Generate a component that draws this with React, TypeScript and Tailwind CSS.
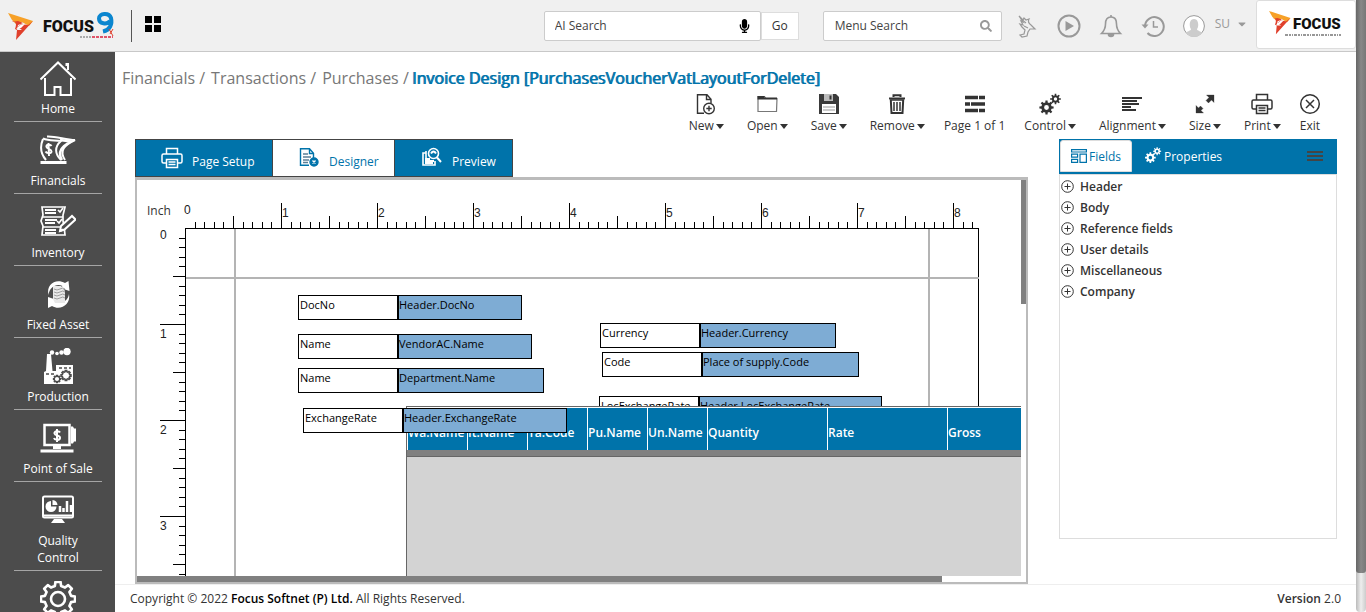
import React from "react";
import { FaMicrophone, FaSearch, FaCaretDown } from "react-icons/fa";

/* ---------- drawing helpers ---------- */

function gear(cx: number, cy: number, outer: number, inner: number, teeth: number): string {
  const pts: string[] = [];
  const step = (Math.PI * 2) / teeth;
  for (let i = 0; i < teeth; i++) {
    const a = i * step;
    const corners: [number, number][] = [
      [-0.3, inner],
      [-0.19, outer],
      [0.19, outer],
      [0.3, inner],
    ];
    corners.forEach(([f, r]) => {
      pts.push(`${(cx + Math.cos(a + f * step) * r).toFixed(2)} ${(cy + Math.sin(a + f * step) * r).toFixed(2)}`);
    });
  }
  return `M${pts.join("L")}Z`;
}

function hole(cx: number, cy: number, r: number): string {
  return `M${cx - r} ${cy}a${r} ${r} 0 1 0 ${r * 2} 0a${r} ${r} 0 1 0 ${-r * 2} 0Z`;
}

type IconProps = { className?: string };

/* ---------- logos ---------- */

const Wing = () => (
  <g>
    <path d="M0 0 L25 8 L21 13 L14 9 L9 12 L4 7Z" fill="#f7a128" />
    <path d="M25 8 L8 27 L9 17 L14 17 L10 14 L13 11 L20 12Z" fill="#e0402c" />
    <path d="M4 9 C8 8 9 11 7 16 L9 17 L10 12 L15 10 L10 8Z" fill="#e0402c" />
    <path d="M8 16 L13 11.500 L17 11 L13 15Z" fill="#fff" />
  </g>
);

const FocusNineLogo = () => (
  <svg width="108" height="32" viewBox="0 0 108 32" role="img" aria-label="Focus 9">
    <g transform="translate(0 3)">
      <Wing />
    </g>
    <text x="35" y="22" fontFamily="Roboto,'Liberation Sans',sans-serif" fontWeight="900" fontSize="16" fill="#111">
      FOCUS
    </text>
    <path d="M102 11 C99 15 91 14 91 8.500 C91 3 101 2 103 8 C104.500 14 102 20 95 21.500" fill="none" stroke="#0b86cf" strokeWidth="4" />
    <path d="M101 19 l4 7 M105 19 l-3 5" stroke="#e0402c" strokeWidth="1" />
    <path d="M72 27h12" stroke="#666" strokeWidth="1" strokeDasharray="2 1" />
    <path d="M84 27h21" stroke="#e0556a" strokeWidth="2" strokeDasharray="3 1" />
  </svg>
);

const FocusLogo = () => (
  <svg width="74" height="28" viewBox="0 0 74 28" role="img" aria-label="Focus">
    <g transform="scale(0.86)">
      <Wing />
    </g>
    <text x="24" y="18" fontFamily="Roboto,'Liberation Sans',sans-serif" fontWeight="900" fontSize="15" fill="#111">
      FOCUS
    </text>
    <path d="M16 24h56" stroke="#777" strokeWidth="1.500" strokeDasharray="3 1 2 1 1 1" />
  </svg>
);

/* ---------- sidebar icons ---------- */

const side = "h-9 w-9 shrink-0";

const HomeIcon = () => (
  <svg className={side} viewBox="0 0 36 36" fill="none" stroke="#fff" strokeWidth="2">
    <path d="M0.500 19.500 18 2.500 35.500 19.500M26.500 6V4h1.500v6M5 18v17h9.500v-8h6v8H31V18" />
  </svg>
);

const FinancialsIcon = () => (
  <svg className={side} viewBox="0 0 36 36" fill="none" stroke="#fff" strokeWidth="1.600">
    <path d="M3 7C0 14 0 21 6 28" strokeWidth="2" />
    <path d="M3 6.500C9 9 14 8 21 9C14 15 15 22 21 28" strokeWidth="2" />
    <path d="M7 4.500C16 4 26 8 35 8C24 13 19 19 25 28" strokeWidth="2" />
    <path d="M20 8l11 1.500C22 14 17 20 22 28" strokeWidth="2.500" />
    <path d="M0.500 30.500h26" strokeWidth="3" />
    <path d="M11.500 14c-1-2-6-1.500-5 1s5 2 5 4.500-5 2-6 0M8.500 11l.5 13" strokeWidth="2" />
  </svg>
);

const InventoryIcon = () => (
  <svg className={side} viewBox="0 0 36 36" fill="none" stroke="#fff" strokeWidth="1.700">
    <path d="M2 3h23l-2 8v6l1 5 1 9H2l1-9-2-5 2-6z" />
    <path d="M2 13h21M3 23h17" />
    <path d="M5 6h11M5 9h11M5 16h12M5 19h10M5 26h11M5 29h11" strokeWidth="2" />
    <path d="M18 6l2 2 3-4M17 17l2 2 3-4" />
    <path d="M20 27l1-5 11-10 3.500 3.500-11 10z" fill="#4c4c4c" strokeWidth="2" />
    <path d="M20 27l3-1.500" strokeWidth="2.500" />
  </svg>
);

const FixedAssetIcon = () => (
  <svg className={side} viewBox="0 0 36 36">
    <path d="M8.500 19C6 8 16 2 25 7l3.500-2 1 10-9-3 2-2c-6-3-13 1-14 9Z" fill="#fff" />
    <path d="M29 18c2 11-9 17-17 12l-4 2V21l9 3-2 2c6 3 13-1 14-8Z" fill="#fff" />
    <path d="M13 10h8l4 5v12H15l-2-4Z" fill="#e8e8e8" />
    <path d="M14 13q3 2 6 0t5 0M14 16q3 2 6 0t5 0M14 19q3 2 6 0t5 0M14 22q3 2 6 0t5 0" stroke="#8a8a8a" fill="none" strokeWidth="0.800" />
  </svg>
);

const ProductionIcon = () => (
  <svg className={side} viewBox="0 0 36 36" fill="#fff">
    <path d="M4 36V24l2-1 1-17h4l1.500 17h3.500V17h17v19Z" />
    <circle cx="27" cy="3.500" r="3.700" />
    <circle cx="21.500" cy="4.500" r="2.200" />
    <circle cx="17" cy="5.500" r="1.800" />
    <circle cx="12" cy="4.500" r="2.200" />
    <path d="M6 26h9M19 20h12" stroke="#4c4c4c" strokeWidth="1.500" strokeDasharray="3 2" />
    <path d={gear(17, 31, 3.6, 2.6, 8)} fill="none" stroke="#4c4c4c" strokeWidth="1.200" />
    <path d={gear(26, 27.5, 5, 3.8, 8)} fill="none" stroke="#4c4c4c" strokeWidth="1.600" />
  </svg>
);

const SaleIcon = () => (
  <svg className={side} viewBox="0 0 36 36" fill="none" stroke="#fff">
    <rect x="4.500" y="5" width="25" height="20" strokeWidth="2.500" />
    <path d="M31 6.500h2l1 2h2v13h-2l-1 2h-2z" fill="#fff" stroke="none" />
    <path d="M13 27.500h8M0.500 31h33" strokeWidth="3" />
    <path d="M20 12.500c-1-2-6-1.500-5.500 1s6 1.500 5.500 4.500-5.500 2-6 0M17 9v13" strokeWidth="2" />
  </svg>
);

const QualityIcon = () => (
  <svg className={side} viewBox="0 0 36 36" fill="none" stroke="#fff">
    <rect x="3" y="4.500" width="30" height="21" rx="1.500" strokeWidth="2" />
    <path d="M3 23.500h30" strokeWidth="2" />
    <path d="M14 27h8l3 4H11z" fill="#fff" stroke="none" />
    <path d="M11 9v5.500h5.500A5.500 5.500 0 1 1 11 9z" fill="#fff" stroke="none" />
    <path d="M12.500 8a5.500 5.500 0 0 1 5 5h-5z" fill="#fff" stroke="none" />
    <path d="M20 20v-6M23.500 20v-4M27 20V9M31 20v-7" strokeWidth="2.500" />
  </svg>
);

const SettingsIcon = () => (
  <svg className={side} viewBox="0 0 36 36" fill="none" stroke="#fff" strokeWidth="2.600" strokeLinejoin="round">
    <g transform="rotate(22.500 18 18)">
      <path d={gear(18, 18, 17.2, 13.4, 8)} transform="rotate(22.500 18 18)" />
    </g>
    <circle cx="18" cy="18" r="7" />
  </svg>
);

/* ---------- toolbar icons ---------- */

const tool = "-mx-1 h-6 w-6";

const NewIcon = () => (
  <svg className={tool} viewBox="0 0 24 24" fill="none" stroke="#333" strokeWidth="1.400">
    <path d="M10 21.300H3.500V2.700h9.500l4 4.500V11M12.500 3v4.500H17" />
    <circle cx="15" cy="16.500" r="5.300" />
    <path d="M15 13.800v5.400M12.300 16.500h5.400" />
  </svg>
);
const OpenIcon = () => (
  <svg className={tool} viewBox="0 0 24 24" fill="none" stroke="#333" strokeWidth="1.200">
    <path d="M3 5v14.500h18.500L22 6.500H11L9.500 4.500H3z" stroke="#777" />
    <path d="M2.500 6.500H22M2.500 5h7" strokeWidth="2" />
  </svg>
);
const TrashIcon = () => (
  <svg className={tool} viewBox="0 0 24 24" fill="none" stroke="#333" strokeWidth="2">
    <path d="M4 6.500h16M8.500 5V3.300h7V5M5.800 8l.7 13h11l.7-13" />
    <path d="M5 8h14" strokeWidth="1.500" />
    <path d="M9 10v9M12 10v9M15 10v9" strokeWidth="1.500" />
  </svg>
);
const PagesIcon = () => (
  <svg className={tool} viewBox="0 0 24 24" stroke="#333" strokeWidth="3.500">
    <path d="M2 5.500h13M16 5.500h6M2 12h5M8 12h14M2 18.500h13M16 18.500h6" />
  </svg>
);
const CogsIcon = ({ className = tool }: IconProps) => (
  <svg className={className} viewBox="0 0 24 24" fill="currentColor" fillRule="evenodd">
    <path d={gear(8.5, 15.5, 7.2, 5.2, 8) + hole(8.5, 15.5, 2.4)} />
    <path d={gear(17.5, 7, 5.4, 3.7, 8) + hole(17.5, 7, 1.7)} />
  </svg>
);
const AlignIcon = () => (
  <svg className={tool} viewBox="0 0 24 24" stroke="#333" strokeWidth="2">
    <path d="M2 6h20M2 9h15M2 12h17M2 15h9M2 18h14" />
  </svg>
);
const SizeIcon = () => (
  <svg className={tool} viewBox="0 0 24 24" fill="#333" stroke="#333">
    <path d="M13.500 3H21v7.500l-2.500-2.500-3 3-2.500-2.500 3-3zM10.500 21H3v-7.500l2.500 2.500 2-2 2.500 2.500-2 2z" strokeWidth="0.300" />
  </svg>
);
const PrintIcon = ({ className = tool }: IconProps) => (
  <svg className={className} viewBox="0 0 24 24" fill="none" stroke="currentColor" strokeWidth="1.500">
    <path d="M6.500 8V2.500h11V8M6.500 17H3.500Q2 17 2 15.500V9.500Q2 8 3.500 8h17Q22 8 22 9.500v6Q22 17 20.500 17h-3" />
    <path d="M6.500 13.500h11v8h-11zM8.500 16h7M8.500 18.500h7" />
  </svg>
);
const ExitIcon = () => (
  <svg className={tool} viewBox="0 0 24 24" fill="none" stroke="#333" strokeWidth="1.500">
    <circle cx="12" cy="12" r="9.300" />
    <path d="M8 8l8 8M16 8l-8 8" />
  </svg>
);
const SaveIcon = () => (
  <svg className={tool} viewBox="0 0 24 24">
    <path d="M2 2h17l3 3v17H2z" fill="#3a3a3a" />
    <path d="M7 2h9v7H7z" fill="#bbb" />
    <path d="M12.500 3.500h2v4h-2z" fill="#333" />
    <path d="M5 12h14v9H5z" fill="#fff" />
    <path d="M6 15h12M6 18h12" stroke="#999" />
  </svg>
);

const DesignerIcon = () => (
  <svg className="h-6 w-6" viewBox="0 0 24 24" fill="none" stroke="#0073aa" strokeWidth="1.400">
    <path d="M12 19.300H3.500V2.700h9l4 4.500V12M12.500 3v4.500H17" />
    <path d="M6 8h5M6 11h8M6 14h6M6 16.500h5" stroke="#5b7f96" />
    <circle cx="17" cy="16" r="4" fill="#0073aa" />
    <path d="M15.500 14.500l3 3M18.500 14.500l-3 3" stroke="#fff" />
  </svg>
);
const PreviewIcon = () => (
  <svg className="h-6 w-6" viewBox="0 0 24 24" fill="none" stroke="#fff" strokeWidth="1.600">
    <path d="M7 7H4v12h12v-4M7 5v10h5" />
    <circle cx="14.500" cy="7.500" r="5" />
    <path d="M12 7.500q2.500-4 5 0M18 11.500l4 4.500M6 13h5M6 15h9M6 17h8" strokeWidth="2" />
  </svg>
);
const FieldsIcon = () => (
  <svg className="h-4 w-4" viewBox="0 0 16 16" fill="none" stroke="#0073aa" strokeWidth="1.200">
    <path d="M0.600 1.600h14.800v2.400H0.600zM0.600 6.200h6v3h-6zM0.600 11.400h6v3h-6zM9 6.200h6.400v8.200H9z" />
  </svg>
);

/* ---------- data ---------- */

const modules = [
  { label: "Home", icon: <HomeIcon /> },
  { label: "Financials", icon: <FinancialsIcon /> },
  { label: "Inventory", icon: <InventoryIcon /> },
  { label: "Fixed Asset", icon: <FixedAssetIcon /> },
  { label: "Production", icon: <ProductionIcon /> },
  { label: "Point of Sale", icon: <SaleIcon /> },
  { label: "Quality Control", icon: <QualityIcon /> },
];

const tools = [
  { label: "New", icon: <NewIcon />, menu: true },
  { label: "Open", icon: <OpenIcon />, menu: true },
  { label: "Save", icon: <SaveIcon />, menu: true },
  { label: "Remove", icon: <TrashIcon />, menu: true },
  { label: "Page 1 of 1", icon: <PagesIcon />, menu: false },
  { label: "Control", icon: <CogsIcon />, menu: true },
  { label: "Alignment", icon: <AlignIcon />, menu: true },
  { label: "Size", icon: <SizeIcon />, menu: true },
  { label: "Print", icon: <PrintIcon />, menu: true },
  { label: "Exit", icon: <ExitIcon />, menu: false },
];

/* Canvas coordinates: left, top, width of the bound value box. */
const fields = [
  { label: "DocNo", value: "Header.DocNo", x: 161, y: 115, w: 124 },
  { label: "Name", value: "VendorAC.Name", x: 161, y: 154, w: 134 },
  { label: "Name", value: "Department.Name", x: 161, y: 188, w: 146 },
  { label: "Currency", value: "Header.Currency", x: 463, y: 143, w: 136 },
  { label: "Code", value: "Place of supply.Code", x: 465, y: 172, w: 157 },
  { label: "LocExchangeRate", value: "Header.LocExchangeRate", x: 462, y: 216, w: 183 },
];
const frontField = { label: "ExchangeRate", value: "Header.ExchangeRate", x: 166, y: 228, w: 164 };

const columns = [
  { label: "Wa.Name", w: 60 },
  { label: "It.Name", w: 60 },
  { label: "Ta.Code", w: 60 },
  { label: "Pu.Name", w: 60 },
  { label: "Un.Name", w: 60 },
  { label: "Quantity", w: 120 },
  { label: "Rate", w: 120 },
  { label: "Gross", w: 120 },
];

const groups = ["Header", "Body", "Reference fields", "User details", "Miscellaneous", "Company"];

/* ---------- canvas parts ---------- */

function Rulers() {
  const ox = 48;
  const oy = 48;
  const ticks = Array.from({ length: 83 }, (_, i) => i);
  return (
    <svg className="absolute top-0 left-0 h-[1200px] w-[884px]" shapeRendering="crispEdges" fontFamily="'Liberation Sans',sans-serif" fontSize="12" fill="#222">
      {ticks.map((i) => {
        const p = Math.round(i * 9.6);
        const major = i % 10 === 0;
        const half = i % 5 === 0;
        const len = major ? 25 : half ? 12 : 6;
        return (
          <g key={i}>
            {i > 0 && <rect x={ox + p} y={oy - len} width="1" height={len} fill="#000" />}
            {i > 0 && i < 42 && <rect x={ox - len} y={oy + p} width={len} height="1" fill="#000" />}
            {major && (
              <text x={i === 0 ? ox - 1 : ox + p + 1} y={i === 0 ? 34 : 37}>
                {i / 10}
              </text>
            )}
            {major && i < 40 && (
              <text x={ox - 25} y={oy + p + (i === 0 ? 11 : 14)}>
                {i / 10}
              </text>
            )}
          </g>
        );
      })}
      <rect x={ox} y={oy} width="794" height="1" fill="#000" />
      <rect x={ox} y={oy} width="1" height="1130" fill="#000" />
      <rect x={ox + 793} y={oy} width="1" height="1130" fill="#000" />
      <rect x={ox + 49} y={oy + 1} width="2" height="1130" fill="#b4b4b4" />
      <rect x={ox + 743} y={oy + 1} width="2" height="1130" fill="#b4b4b4" />
      <rect x={ox + 1} y={oy + 49} width="793" height="2" fill="#b4b4b4" />
    </svg>
  );
}

type FieldDef = { label: string; value: string; x: number; y: number; w: number };

function PlacedField({ field }: { field: FieldDef }) {
  return (
    <div className="absolute flex h-[25px] text-[11px] leading-[18px] whitespace-nowrap text-black" style={{ left: field.x, top: field.y }}>
      <div className="w-[100px] border border-black bg-white pl-px">{field.label}</div>
      <div className="border border-black bg-[#7eacd4]" style={{ width: field.w }}>
        {field.value}
      </div>
    </div>
  );
}

/* ---------- page ---------- */

function Header() {
  return (
    <header className="flex h-[52px] shrink-0 items-center border-b border-[#c8c8c8] bg-[#f0f0f0] pl-2 text-[12px] text-[#333]">
      <FocusNineLogo />
      <div className="ml-[15px] h-8 w-px bg-[#555]" />
      <button aria-label="Applications" className="-mt-1 ml-[13px] grid grid-cols-2 gap-[2px]">
        <span className="h-[7px] w-[7px] bg-black" />
        <span className="h-[7px] w-[7px] bg-black" />
        <span className="h-[7px] w-[7px] bg-black" />
        <span className="h-[7px] w-[7px] bg-black" />
      </button>
      <div className="ml-auto flex h-[30px] w-[217px] items-center rounded-[2px] border border-[#ccc] bg-white px-[10px]">
        <input aria-label="AI Search" placeholder="AI Search" className="min-w-0 flex-1 bg-transparent outline-none placeholder:text-[#444]" />
        <FaMicrophone className="h-[14px] w-[11px] text-black" />
      </div>
      <button className="h-7 w-[38px] border border-[#ddd] bg-white">Go</button>
      <div className="ml-6 flex h-[30px] w-[179px] items-center rounded-[2px] border border-[#ccc] bg-white pr-[9px] pl-[11px]">
        <input aria-label="Menu Search" placeholder="Menu Search" className="min-w-0 flex-1 bg-transparent outline-none placeholder:text-[#444]" />
        <FaSearch className="h-3 w-3 text-[#999]" />
      </div>
      <div className="ml-[13px] flex items-center gap-[18px] text-[#999]">
        <button aria-label="Assistant">
          <svg className="h-6 w-6" viewBox="0 0 24 24" fill="none" stroke="currentColor" strokeWidth="1.200">
            <path d="M4 2l4 4 1-2 2 2 3-1c-1 2-1 4 2 6l4 4-5 0-2 3-1 4-5 1-2-2 4-1 1-4-3-3-2-3 3 1-2-4 2 1z" />
            <path d="M6 5l5 4M9 12l4 2" />
          </svg>
        </button>
        <button aria-label="Play">
          <svg className="h-6 w-6" viewBox="0 0 24 24" fill="none" stroke="currentColor" strokeWidth="2">
            <circle cx="12" cy="12" r="10.500" />
            <path d="M8.500 7l8.500 5-8.500 5z" fill="currentColor" stroke="none" />
          </svg>
        </button>
        <button aria-label="Notifications">
          <svg className="h-6 w-6" viewBox="0 0 24 24" fill="none" stroke="currentColor" strokeWidth="1.600">
            <path d="M12 3C7 3 6.500 7 6.500 10c0 5-1.500 7-4 9.500h19c-2.500-2.500-4-4.500-4-9.500 0-3-.5-7-5.500-7z" />
            <path d="M12 3V1M9.500 20.500a2.500 2 0 0 0 5 0z" fill="currentColor" />
          </svg>
        </button>
        <button aria-label="History">
          <svg className="h-6 w-6" viewBox="0 0 24 24" fill="none" stroke="currentColor" strokeWidth="2">
            <path d="M4 11.500A9.400 9.400 0 1 1 6.500 19" />
            <path d="M0.500 10.500h7l-3.500 4z" fill="currentColor" stroke="none" />
            <path d="M12.500 7v6h4.500" strokeWidth="1.500" />
          </svg>
        </button>
        <button className="flex items-center text-[#999]">
          <svg className="h-[22px] w-[22px]" viewBox="0 0 22 22">
            <circle cx="11" cy="11" r="10.400" fill="#fff" stroke="#999" />
            <path d="M3 18c1-2 5-2 5-4C6 12 6 4 11 4s5 8 3 10c0 2 4 2 5 4a10 10 0 0 1-16 0z" fill="#ccc" />
          </svg>
          <span className="mb-1 ml-[10px]">SU</span>
          <FaCaretDown className="mb-1 ml-[6px] h-3 w-3" />
        </button>
      </div>
      <div className="mb-[2px] ml-2 flex h-[49px] w-[100px] items-center justify-center rounded-[3px] border border-[#ddd] bg-white">
        <FocusLogo />
      </div>
    </header>
  );
}

function Sidebar() {
  const item = "flex w-[88px] flex-col items-center gap-1 border-b border-[#a5a5a5] pb-1 text-center text-[12px] leading-[17px] text-white";
  return (
    <nav className="w-[115px] shrink-0 overflow-hidden bg-[#4c4c4c] px-[14px]">
      {modules.map((m, i) => (
        <a key={m.label} href="#" className={(i === 0 ? "pt-2 " : "pt-[10px] ") + item}>
          {m.icon}
          <span className="w-[70px]">{m.label}</span>
        </a>
      ))}
      <a href="#" aria-label="Settings" className={"pt-[10px] " + item}>
        <SettingsIcon />
      </a>
    </nav>
  );
}

function DesignerPane() {
  const tab = "flex h-[38px] items-center border border-[#444] text-[12px]";
  return (
    <section className="flex min-w-0 flex-1 flex-col">
      <div role="tablist" className="flex">
        <button role="tab" className={tab + " w-[138px] bg-[#0073aa] pl-6 text-white"}>
          <PrintIcon className="h-6 w-6" />
          <span className="mt-2 ml-2">Page Setup</span>
        </button>
        <button role="tab" aria-selected className={tab + " w-[122px] border-l-0 bg-white pl-6 text-[#0073aa]"}>
          <DesignerIcon />
          <span className="mt-2 ml-2">Designer</span>
        </button>
        <button role="tab" className={tab + " w-[118px] border-l-0 bg-[#0073aa] pl-6 text-white"}>
          <PreviewIcon />
          <span className="mt-2 ml-[9px]">Preview</span>
        </button>
      </div>
      <div className="flex min-h-0 flex-1 flex-col border-2 border-t-[3px] border-[#bbb] bg-white">
        <div className="flex min-h-0 flex-1">
          <div className="relative min-w-0 flex-1 overflow-hidden">
            <Rulers />
            <span className="absolute top-[22px] left-[10px] text-[12px] leading-[18px] text-[#333]">Inch</span>
            {fields.map((f) => (
              <PlacedField key={f.value} field={f} />
            ))}
            <div className="absolute top-[226px] left-[269px] flex h-[400px] w-[720px] flex-col border border-[#666] bg-[#d3d3d3]">
              <div className="flex h-[43px] shrink-0 border-t border-white bg-[#0073aa] text-[12px] font-semibold text-white">
                {columns.map((c) => (
                  <div key={c.label} className="shrink-0 border-l border-white pt-4 leading-[18px] whitespace-nowrap" style={{ width: c.w }}>
                    {c.label}
                  </div>
                ))}
              </div>
              <div className="h-[7px] shrink-0 border-b border-[#666] bg-[#808080]" />
            </div>
            <PlacedField field={frontField} />
          </div>
          <div className="w-[5px] bg-white">
            <div className="h-[124px] bg-[#808080]" />
          </div>
        </div>
        <div className="h-[6px] bg-white">
          <div className="h-full w-[805px] bg-[#808080]" />
        </div>
      </div>
    </section>
  );
}

function FieldsPane() {
  return (
    <aside className="flex h-[400px] w-[278px] shrink-0 flex-col text-[12px]">
      <div role="tablist" className="flex h-[35px] shrink-0 items-start bg-[#0073aa]">
        <button role="tab" aria-selected className="mt-px ml-px flex h-8 w-[72px] items-center justify-center gap-[2px] rounded-t-[3px] border border-[#ddd] bg-white text-[#0073aa]">
          <FieldsIcon />
          <span className="mt-[2px]">Fields</span>
        </button>
        <button role="tab" className="mt-px ml-3 flex h-8 items-center gap-[2px] font-medium text-white">
          <CogsIcon className="mb-[2px] h-[18px] w-[18px]" />
          <span className="mt-[2px]">Properties</span>
        </button>
        <button aria-label="Panel menu" className="mt-3 mr-[14px] ml-auto flex flex-col gap-[2px]">
          <span className="h-[2px] w-4 bg-[#444]" />
          <span className="h-[2px] w-4 bg-[#444]" />
          <span className="h-[2px] w-4 bg-[#444]" />
        </button>
      </div>
      <ul className="flex-1 border border-[#ddd] bg-white pt-px text-[#333]">
        {groups.map((g) => (
          <li key={g}>
            <button className="flex h-[21px] items-center gap-[6px] pl-px font-semibold">
              <svg className="h-[13px] w-[13px]" viewBox="0 0 13 13" fill="none" stroke="#333">
                <circle cx="6.500" cy="6.500" r="5.800" />
                <path d="M6.500 3.500v6M3.500 6.500h6" />
              </svg>
              {g}
            </button>
          </li>
        ))}
      </ul>
    </aside>
  );
}

export default function App() {
  return (
    <div className="flex h-screen overflow-hidden bg-white font-['Open_Sans','Noto_Sans',sans-serif]">
      <div className="flex min-w-0 flex-1 flex-col">
        <Header />
        <div className="flex min-h-0 flex-1">
          <Sidebar />
          <main className="flex min-w-0 flex-1 flex-col">
            <nav className="flex gap-[6px] pt-[14px] pl-[7px] text-[16px] leading-6 whitespace-nowrap text-[#777]">
              <a href="#">Financials /</a>
              <a href="#">Transactions /</a>
              <a href="#">Purchases /</a>
              <h1 className="-ml-[3px] text-[#0073aa] [text-shadow:1px_0_0_#0073aa]">Invoice Design [PurchasesVoucherVatLayoutForDelete]</h1>
            </nav>
            <div className="flex justify-end gap-[19px] pt-[2px] pr-9 pb-1 text-[12px] text-[#333]">
              {tools.map((t, i) => (
                <button key={t.label} className={(t.menu && tools[i + 1]?.menu ? "mr-1 " : "") + "flex flex-col items-center gap-px"}>
                  {t.icon}
                  <span className="flex items-center gap-[2px] leading-[18px] whitespace-nowrap">
                    {t.label}
                    {t.menu && (
                      <svg className="h-[5px] w-2" viewBox="0 0 8 5" fill="#333">
                        <path d="M0 0h8L4 5z" />
                      </svg>
                    )}
                  </span>
                </button>
              ))}
            </div>
            <div className="flex min-h-0 flex-1 gap-[31px] pr-[19px] pl-5">
              <DesignerPane />
              <FieldsPane />
            </div>
            <footer className="flex h-7 shrink-0 items-center justify-between border-t border-[#eee] px-[15px] text-[12px] text-[#333]">
              <p>
                <span className="font-medium">Copyright © 2022 </span>
                <strong className="font-semibold text-black">Focus Softnet (P) Ltd.</strong> All Rights Reserved.
              </p>
              <p>
                <span className="font-semibold">Version</span> 2.0
              </p>
            </footer>
          </main>
        </div>
      </div>
      <div className="flex w-[10px] shrink-0 flex-col rounded-b-[4px] bg-linear-to-r from-[#bbb] via-[#eee] to-[#ccc]">
        <div className="h-[573px] rounded-b-[3px] bg-linear-to-r from-[#666] via-[#888] to-[#777]" />
      </div>
    </div>
  );
}
